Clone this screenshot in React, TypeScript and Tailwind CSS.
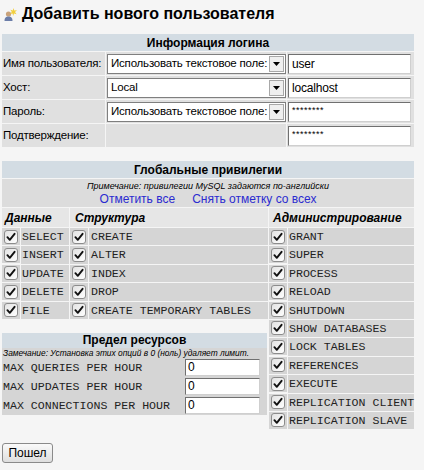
import React from 'react';

const dataPrivs = ['SELECT', 'INSERT', 'UPDATE', 'DELETE', 'FILE'];
const structPrivs = ['CREATE', 'ALTER', 'INDEX', 'DROP', 'CREATE TEMPORARY TABLES'];
const adminPrivs = [
  'GRANT',
  'SUPER',
  'PROCESS',
  'RELOAD',
  'SHUTDOWN',
  'SHOW DATABASES',
  'LOCK TABLES',
  'REFERENCES',
  'EXECUTE',
  'REPLICATION CLIENT',
  'REPLICATION SLAVE',
];
const limits = ['MAX QUERIES PER HOUR', 'MAX UPDATES PER HOUR', 'MAX CONNECTIONS PER HOUR'];

const mono = { fontFamily: '"Liberation Mono", "Courier New", monospace' };
const sans = { fontFamily: '"Liberation Sans", Arial, sans-serif' };

function Check() {
  return (
    <svg width="14" height="14" viewBox="0 0 14 14">
      <defs>
        <linearGradient id="cb" x1="0" y1="0" x2="1" y2="1">
          <stop offset="0" stopColor="#e2e2e2" />
          <stop offset="1" stopColor="#ffffff" />
        </linearGradient>
      </defs>
      <rect x="0.5" y="0.5" width="13" height="13" rx="2.5" fill="url(#cb)" stroke="#8c8c8c" />
      <path d="M3.4 7.2 L5.8 9.8 L10.6 3.8" fill="none" stroke="#111" strokeWidth="1.9" strokeLinecap="round" strokeLinejoin="round" />
    </svg>
  );
}

function UserIcon() {
  return (
    <svg width="15" height="15" viewBox="0 0 15 15">
      <circle cx="5.5" cy="7" r="2.6" fill="#c9a27a" />
      <path d="M1.5 14 C1.5 10.5 3.2 9.6 5.5 9.6 C7.8 9.6 9.5 10.5 9.5 14 Z" fill="#6b7da8" />
      <path d="M10.5 1 L11.3 3.6 L14 3.2 L12 5 L13.6 7.2 L11 6.4 L10.2 9 L9.6 6.4 L7 7 L8.8 5 L7.4 2.8 L9.8 3.6 Z" fill="#f2cf3c" />
    </svg>
  );
}

function Select({ value }: { value: string }) {
  return (
    <div className="flex h-[20px] w-[179px] items-center overflow-hidden border border-[#7f7f7f] bg-white">
      <span className="flex-1 overflow-hidden pl-[3px] text-[11.5px] leading-none tracking-[-0.2px] whitespace-nowrap">{value}</span>
      <span className="mr-[1px] flex h-[16px] w-[15px] shrink-0 items-center justify-center border border-[#a8a8a8] bg-[#efefef]">
        <svg width="7" height="4" viewBox="0 0 7 4">
          <path d="M0 0 L7 0 L3.5 4 Z" fill="#000" />
        </svg>
      </span>
    </div>
  );
}

function TextBox({ value, w, pw }: { value: string; w: string; pw?: boolean }) {
  return (
    <div
      className={`flex h-[20px] ${w} border border-t-[#707070] border-l-[#707070] border-r-[#cfcfcf] border-b-[#cfcfcf] bg-white pl-[3px] ${pw ? 'items-start pt-[1px] text-[9px] tracking-[0.5px]' : 'items-center text-[12px]'}`}
    >
      {value}
    </div>
  );
}

export default function App() {
  return (
    <div className="h-[470px] w-[424px] bg-[#f5f5f5] pt-[6px] text-black" style={sans}>
      <div className="flex items-center gap-[4px] pl-[3px]">
        <UserIcon />
        <h1 className="text-[16px] leading-[16px] font-bold">Добавить нового пользователя</h1>
      </div>

      {/* login info */}
      <div className="ml-[2px] mt-[12px] grid w-[412px] grid-cols-[103px_180px_127px] gap-px text-[11.5px] tracking-[-0.2px] whitespace-nowrap">
        <div className="col-span-3 flex h-[17px] items-center justify-center bg-[#d3dce3] text-[12px] font-bold tracking-normal">Информация логина</div>

        <div className="flex h-[23px] items-center bg-[#e0e0e0] pl-[1px]">Имя пользователя:</div>
        <div className="flex items-center bg-[#e0e0e0] pl-[1px]"><Select value="Использовать текстовое поле:" /></div>
        <div className="flex items-center bg-[#e0e0e0] pl-[1px]"><TextBox value="user" w="w-[123px]" /></div>

        <div className="flex h-[23px] items-center bg-[#e0e0e0] pl-[1px]">Хост:</div>
        <div className="flex items-center bg-[#e0e0e0] pl-[1px]"><Select value="Local" /></div>
        <div className="flex items-center bg-[#e0e0e0] pl-[1px]"><TextBox value="localhost" w="w-[123px]" /></div>

        <div className="flex h-[23px] items-center bg-[#e0e0e0] pl-[1px]">Пароль:</div>
        <div className="flex items-center bg-[#e0e0e0] pl-[1px]"><Select value="Использовать текстовое поле:" /></div>
        <div className="flex items-center bg-[#e0e0e0] pl-[1px]"><TextBox value="********" w="w-[123px]" pw /></div>

        <div className="flex h-[23px] items-center bg-[#e0e0e0] pl-[1px]">Подтверждение:</div>
        <div className="bg-[#e0e0e0]" />
        <div className="flex items-center bg-[#e0e0e0] pl-[1px]"><TextBox value="********" w="w-[123px]" pw /></div>
      </div>

      {/* global privileges */}
      <div className="ml-[2px] mt-[14px] flex w-[412px] flex-col gap-px text-[12px]">
        <div className="flex h-[17px] items-center justify-center bg-[#d3dce3] font-bold">Глобальные привилегии</div>
        <div className="flex h-[28px] flex-col items-center bg-[#dcdcdc] pt-[2px]">
          <span className="text-[9px] leading-[11px] italic">Примечание: привилегии MySQL задаются по-английски</span>
          <div className="flex gap-[17px] text-[12px] leading-[14px] text-[#2b2bd0]">
            <span>Отметить все</span>
            <span>Снять отметку со всех</span>
          </div>
        </div>

        <div className="flex gap-px">
          <div className="flex w-[266px] flex-col">
            <div className="grid grid-cols-[18px_48px_18px_179px] gap-px text-[#222]" style={mono}>
              <div className="col-span-2 flex h-[19px] items-center bg-[#e6e6e6] pl-[3px] text-[12px] font-bold text-black italic" style={sans}>Данные</div>
              <div className="col-span-2 flex items-center bg-[#e6e6e6] pl-[5px] text-[12px] font-bold text-black italic" style={sans}>Структура</div>
              {dataPrivs.map((d, i) => (
                <React.Fragment key={d}>
                  <div className="flex h-[17px] items-center justify-center bg-[#d5d5d5]"><Check /></div>
                  <div className="flex items-center bg-[#d5d5d5] pl-[1px] text-[11.6px]">{d}</div>
                  <div className="flex items-center justify-center bg-[#d5d5d5]"><Check /></div>
                  <div className="flex items-center bg-[#d5d5d5] pl-[2px] text-[11.6px] whitespace-nowrap">{structPrivs[i]}</div>
                </React.Fragment>
              ))}
            </div>

            <div className="mt-[14px] w-[265px] bg-[#d5d5d5]">
              <div className="flex h-[15px] items-center justify-center bg-[#d3dce3] text-[12px] font-bold">Предел ресурсов</div>
              <div className="h-[11px] pl-[1px] text-[8.4px] leading-[11px] whitespace-nowrap italic">Замечание: Установка этих опций в 0 (ноль) удаляет лимит.</div>
              <div className="flex flex-col gap-[2px] pb-px">
                {limits.map((l) => (
                  <div key={l} className="flex h-[17px] items-center">
                    <span className="w-[183px] pl-[1px] text-[11.6px] whitespace-nowrap text-[#222]" style={mono}>{l}</span>
                    <div className="flex h-[17px] w-[75px] items-center border border-t-[#707070] border-l-[#707070] border-r-[#cfcfcf] border-b-[#cfcfcf] bg-white pl-[2px] text-[12px]">0</div>
                  </div>
                ))}
              </div>
            </div>
          </div>

          <div className="grid h-fit w-[145px] grid-cols-[18px_126px] gap-px text-[#222]" style={mono}>
            <div className="col-span-2 flex h-[19px] items-center bg-[#e6e6e6] pl-[4px] text-[12px] font-bold text-black italic" style={sans}>Администрирование</div>
            {adminPrivs.map((a) => (
              <React.Fragment key={a}>
                <div className="flex h-[17px] items-center justify-center bg-[#d5d5d5]"><Check /></div>
                <div className="flex items-center bg-[#d5d5d5] pl-[1px] text-[11.6px] whitespace-nowrap">{a}</div>
              </React.Fragment>
            ))}
          </div>
        </div>
      </div>

      <button className="ml-[2px] mt-[14px] h-[20px] w-[51px] rounded-[3px] border border-[#8a8a8a] bg-gradient-to-b from-[#fafafa] to-[#dedede] text-[12px]">Пошел</button>
    </div>
  );
}
